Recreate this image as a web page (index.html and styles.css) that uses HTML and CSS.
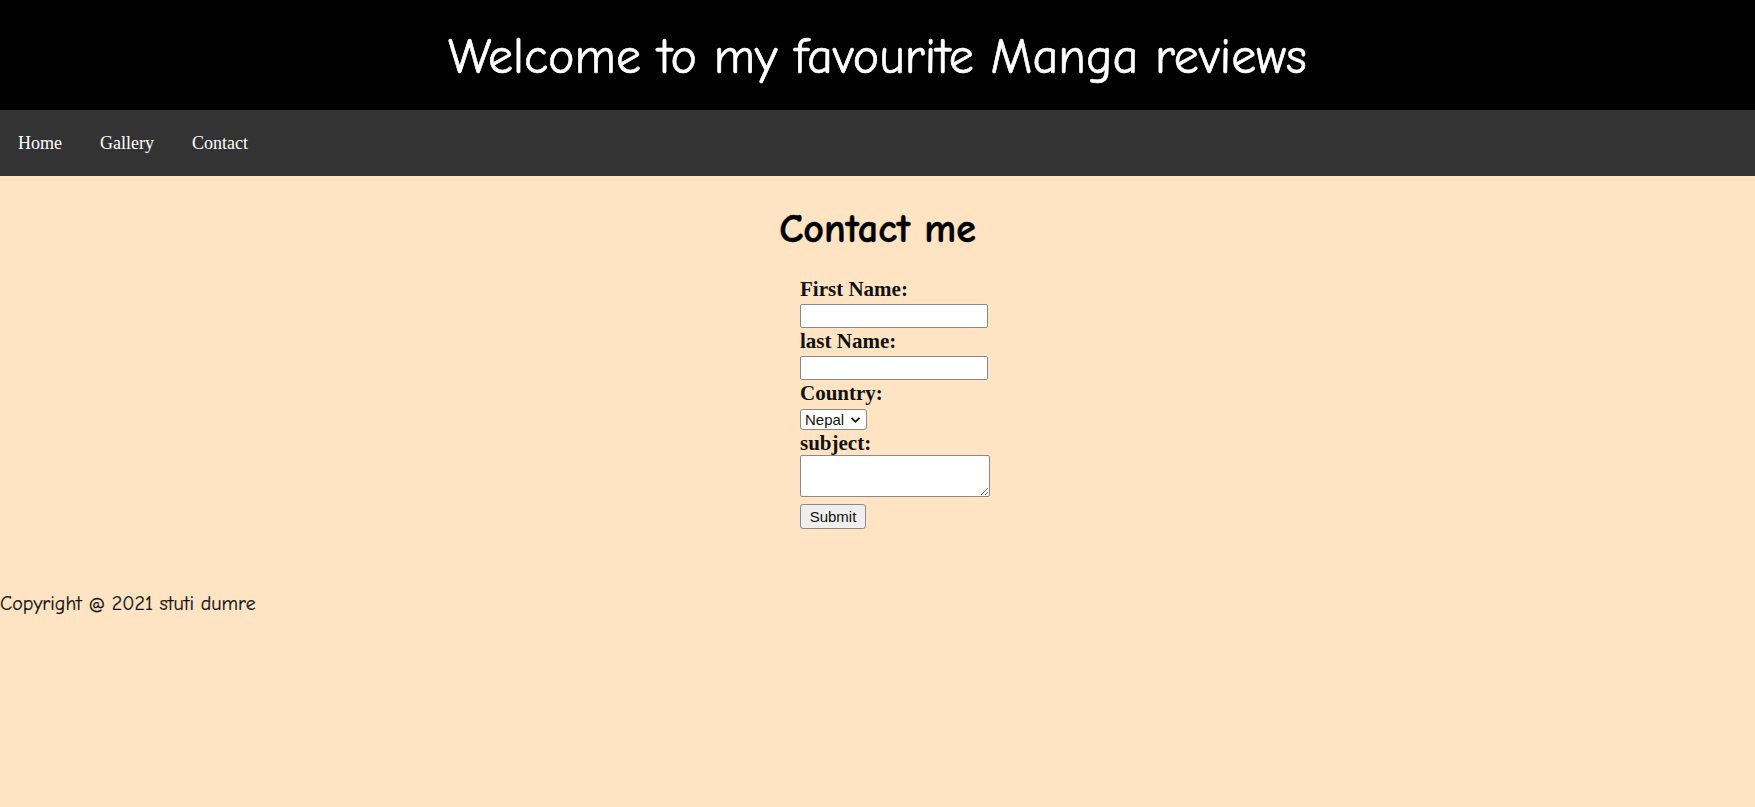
FILE: index.html
```html
<!DOCTYPE html>
<html lang="en">
<head>
<meta charset="utf-8">
<title>Contact</title>
<link rel="stylesheet" href="styles.css">
</head>
<body>
<header class="site-header">
  <h1 class="site-title">Welcome to my favourite Manga reviews</h1>
</header>
<nav class="site-nav">
  <a class="nav-link" href="#">Home</a>
  <a class="nav-link" href="#">Gallery</a>
  <a class="nav-link" href="#">Contact</a>
</nav>
<main class="content">
  <h2 class="page-title">Contact me</h2>
  <div class="form-wrap">
    <form class="contact-form">
      <label class="field-label" for="fname">First Name:</label>
      <input class="text-input" type="text" id="fname">
      <label class="field-label" for="lname">last Name:</label>
      <input class="text-input" type="text" id="lname">
      <label class="field-label" for="country">Country:</label>
      <div class="select-box">
        <span class="select-text">Nepal</span>
        <svg class="select-arrow" width="11" height="8" viewBox="0 0 11 8"><path d="M1.5 1.8 L5.5 5.8 L9.5 1.8" fill="none" stroke="#111" stroke-width="1.8"/></svg>
      </div>
      <label class="field-label label-subject" for="subject">subject:</label>
      <textarea class="text-area" id="subject"></textarea>
      <button class="submit-btn" type="button">Submit</button>
    </form>
  </div>
</main>
<footer class="site-footer">Copyright @ 2021 stuti dumre</footer>
</body>
</html>
```
FILE: styles.css
```css
html, body {
  margin: 0;
  padding: 0;
}
body {
  background: #ffe4c4;
  min-height: 807px;
  font-family: "Liberation Serif", "Times New Roman", serif;
}
.site-header {
  background: #000;
  height: 110px;
  display: flex;
  align-items: center;
  justify-content: center;
}
.site-title {
  margin: 0;
  color: #fff;
  font-family: "Comic Sans MS", "Comic Neue", "Open Sans", sans-serif;
  font-weight: normal;
  font-size: 50px;
  line-height: 56px;
  padding-top: 4px;
  -webkit-text-stroke: 0.6px #fff;
}
.site-nav {
  background: #333;
  height: 66px;
  display: flex;
  align-items: center;
  padding-left: 0;
}
.nav-link {
  color: #fff;
  text-decoration: none;
  font-size: 18px;
  padding: 0 18px;
  line-height: 20px;
}
.nav-link + .nav-link {
  margin-left: 2px;
}
.content {
  padding-top: 29px;
}
.page-title {
  margin: 0;
  text-align: center;
  font-family: "Comic Sans MS", "Comic Neue", "Open Sans", sans-serif;
  font-weight: bold;
  font-size: 40px;
  line-height: 48px;
  -webkit-text-stroke: 0.5px #000;
}
.form-wrap {
  display: flex;
  padding-left: 800px;
  margin-top: 23px;
}
.contact-form {
  display: flex;
  flex-direction: column;
  align-items: flex-start;
}
.field-label {
  display: block;
  font-weight: bold;
  font-size: 21px;
  line-height: 26px;
  height: 26px;
  margin-bottom: 2px;
  color: #111;
}
.text-input {
  box-sizing: border-box;
  width: 188px;
  height: 24px;
  margin: 0;
  border: 1px solid #8a8a8a;
  border-radius: 2px;
  background: #fff;
  padding: 1px 3px;
}
.select-box {
  box-sizing: border-box;
  width: 67px;
  height: 21px;
  margin-top: 1px;
  border: 1px solid #8a8a8a;
  border-radius: 3px;
  background: #fff;
  display: flex;
  align-items: center;
  justify-content: space-between;
  padding: 0 5px 0 4px;
  font-family: "Liberation Sans", Arial, sans-serif;
  font-size: 15px;
  color: #111;
}
.select-arrow {
  display: block;
}
.label-subject {
  margin-bottom: -1px;
}
.text-area {
  box-sizing: border-box;
  width: 190px;
  height: 42px;
  margin: 0;
  border: 1px solid #8a8a8a;
  border-radius: 2px;
  background: #fff;
  resize: both;
}
.submit-btn {
  box-sizing: border-box;
  width: 66px;
  height: 25px;
  margin-top: 7px;
  padding: 0;
  border: 1px solid #8a8a8a;
  border-radius: 3px;
  background: #efefef;
  font-family: "Liberation Sans", Arial, sans-serif;
  font-size: 15px;
  color: #111;
}
.site-footer {
  margin-top: 63px;
  font-family: "Comic Sans MS", "Comic Neue", "Open Sans", sans-serif;
  font-size: 20px;
  line-height: 24px;
  color: #111;
  -webkit-text-stroke: 0.2px #111;
}
```
